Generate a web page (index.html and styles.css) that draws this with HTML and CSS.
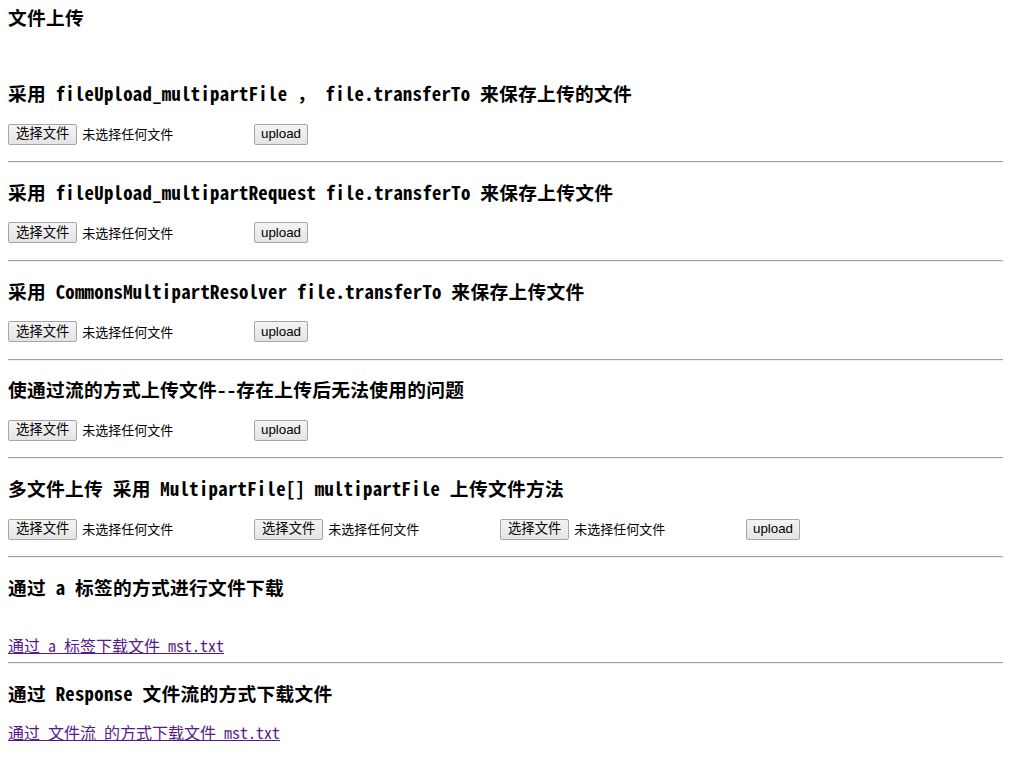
FILE: index.html
```html
<!DOCTYPE HTML>
<html>
<head>
    <title>文件上传</title>
    <meta http-equiv="content-type" content="text/html; charset=utf-8">
    <link rel="stylesheet" href="styles.css">
</head>
<body>
    <h3 class="page-title">文件上传</h3>

    <h3>采用 fileUpload_multipartFile ， file.transferTo 来保存上传的文件</h3>
    <form class="upload-row">
        <span class="picker"><button type="button" class="btn choose">选择文件</button><span class="picker-text">未选择任何文件</span></span>
        <button type="button" class="btn">upload</button>
    </form>
    <hr>

    <h3>采用 fileUpload_multipartRequest file.transferTo 来保存上传文件</h3>
    <form class="upload-row">
        <span class="picker"><button type="button" class="btn choose">选择文件</button><span class="picker-text">未选择任何文件</span></span>
        <button type="button" class="btn">upload</button>
    </form>
    <hr>

    <h3>采用 CommonsMultipartResolver file.transferTo 来保存上传文件</h3>
    <form class="upload-row">
        <span class="picker"><button type="button" class="btn choose">选择文件</button><span class="picker-text">未选择任何文件</span></span>
        <button type="button" class="btn">upload</button>
    </form>
    <hr>

    <h3>使通过流的方式上传文件--存在上传后无法使用的问题</h3>
    <form class="upload-row">
        <span class="picker"><button type="button" class="btn choose">选择文件</button><span class="picker-text">未选择任何文件</span></span>
        <button type="button" class="btn">upload</button>
    </form>
    <hr>

    <h3>多文件上传 采用 MultipartFile[] multipartFile 上传文件方法</h3>
    <form class="upload-row">
        <span class="picker"><button type="button" class="btn choose">选择文件</button><span class="picker-text">未选择任何文件</span></span>
        <span class="picker"><button type="button" class="btn choose">选择文件</button><span class="picker-text">未选择任何文件</span></span>
        <span class="picker"><button type="button" class="btn choose">选择文件</button><span class="picker-text">未选择任何文件</span></span>
        <button type="button" class="btn">upload</button>
    </form>
    <hr>

    <h3>通过 a 标签的方式进行文件下载</h3>
    <br>
    <a href="#download">通过 a 标签下载文件 mst.txt</a>
    <hr>

    <h3>通过 Response 文件流的方式下载文件</h3>
    <a href="#download-stream">通过 文件流 的方式下载文件 mst.txt</a>
</body>
</html>
```

FILE: styles.css
```css
body {
  margin: 8px;
  font-family: "Noto Sans Mono CJK SC", "Liberation Mono", "Noto Sans CJK SC", monospace;
  font-size: 16px;
  line-height: 18px;
  color: #000;
  background: #fff;
}

h3 {
  font-size: 18.72px;
  line-height: 21px;
  font-weight: bold;
  letter-spacing: 0.3px;
  margin: 17.75px 0 20px;
}

h3.page-title {
  margin: -2px 0 55px;
}

.upload-row {
  display: flex;
  align-items: center;
  gap: 4px;
  margin: 0 0 16px;
  height: 22px;
}

.picker {
  width: 242px;
  display: flex;
  align-items: center;
}

.picker-text {
  margin-left: 5px;
  font-family: "Noto Sans CJK SC", sans-serif;
  font-size: 13px;
  line-height: 16px;
}

.btn {
  font-family: "Liberation Sans", "Noto Sans CJK SC", sans-serif;
  font-size: 13.33px;
  line-height: 16px;
  height: 21px;
  padding: 0 6px;
  margin: 0;
  color: #000;
  background: linear-gradient(#f4f4f4, #e4e4e4);
  border: 1px solid #a6a6a6;
  border-radius: 2px;
}

.btn.choose {
  padding: 0 7px;
}

hr {
  margin: 8px -8px 8px 0;
  border: 0;
  border-top: 1px solid #a0a0a0;
  border-bottom: 1px solid #eeeeee;
}

br + a {
  display: inline-block;
  margin-top: 1px;
}

a {
  color: #551a8b;
  text-decoration: underline;
}
```
